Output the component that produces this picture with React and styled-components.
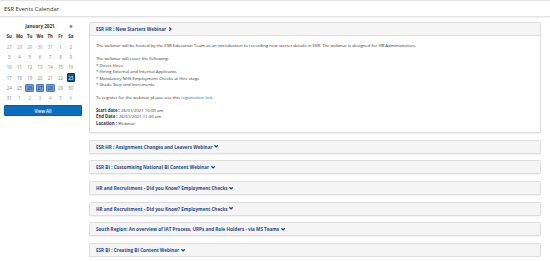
import React from 'react';
import styled, { createGlobalStyle } from 'styled-components';

const GlobalStyle = createGlobalStyle`
  body {
    margin: 0;
    background: #fff;
    font-family: "Open Sans", "Liberation Sans", sans-serif;
    color: #333;
  }
`;

const TopBar = styled.div`
  height: 15px;
  border-top: 1px solid #e6e6e6;
  border-bottom: 1px solid #e2e2e2;
  box-shadow: 0 1px 1px rgba(0, 0, 0, 0.04);
  display: flex;
  align-items: center;
  padding-left: 4px;
  font-size: 5.8px;
  color: #333;
`;

const Main = styled.div`
  display: flex;
  align-items: flex-start;
  gap: 7px;
  padding: 4px 9px 0 4px;
`;

const Sidebar = styled.div`
  width: 78px;
  flex-shrink: 0;
  display: flex;
  flex-direction: column;
`;

const CalGrid = styled.div`
  width: 72px;
  display: grid;
  grid-template-columns: repeat(7, 1fr);
  grid-auto-rows: 10.3px;
  font-size: 4.4px;
`;

const MonthTitle = styled.div`
  grid-column: 2 / 7;
  display: flex;
  align-items: center;
  justify-content: center;
  font-weight: 700;
  font-size: 4.6px;
  color: #333;
`;

const NavArrow = styled.div`
  grid-column: ${p => p.col};
  display: flex;
  align-items: center;
  justify-content: center;
  font-weight: 700;
  font-size: 5.5px;
  color: #333;
`;

const DayHead = styled.div`
  display: flex;
  align-items: center;
  justify-content: center;
  font-weight: 700;
  color: #333;
`;

const Day = styled.div`
  margin: 0.9px;
  display: flex;
  align-items: center;
  justify-content: center;
  border-radius: 1px;
  color: ${p => (p.kind === 'today' ? '#fff' : p.kind === 'event' ? '#1d3f78' : p.muted ? '#a0a0a0' : '#888')};
  background: ${p => (p.kind === 'today' ? '#0b5288' : p.kind === 'event' ? '#6b9bd8' : 'transparent')};
  border: 0.6px solid ${p => (p.kind === 'today' ? '#05385f' : p.kind === 'event' ? '#4f7fc0' : 'transparent')};
`;

const ViewAll = styled.button`
  margin-top: 1.5px;
  height: 11.5px;
  width: 100%;
  border: 0.6px solid #075da3;
  border-radius: 1px;
  background: #0a6ebd;
  color: #fff;
  font-family: inherit;
  font-size: 4.5px;
  font-weight: 600;
  padding: 0;
  cursor: pointer;
`;

const Events = styled.div`
  flex: 1;
  display: flex;
  flex-direction: column;
  gap: 6.7px;
  padding-top: 1px;
`;

const Panel = styled.div`
  border: 0.7px solid #ddd;
  border-radius: 1.5px;
  background: #fff;
  box-shadow: 0 1px 1px rgba(0, 0, 0, 0.06);
`;

const PanelHead = styled.div`
  height: 12px;
  display: flex;
  align-items: center;
  gap: 1.5px;
  padding-left: 6px;
  background: #f5f5f5;
  border-bottom: ${p => (p.open ? '0.7px solid #ddd' : 'none')};
  color: #274a8c;
  font-weight: 700;
  font-size: 4.6px;
`;

const PanelBody = styled.div`
  padding: 6.4px 6px 5.6px;
  font-size: 4.3px;
  line-height: 6.4px;
  color: #333;
  p {
    margin: 0 0 6.6px;
  }
  p:last-child {
    margin-bottom: 0;
  }
  a {
    color: #2a5db0;
    text-decoration: none;
  }
  b {
    font-weight: 700;
  }
`;

const Chevron = ({ dir }) => (
  <svg width="4.2" height="4.2" viewBox="0 0 10 10" aria-hidden="true">
    <path
      d={dir === 'right' ? 'M3 1 L7 5 L3 9' : 'M1 3 L5 7 L9 3'}
      fill="none"
      stroke="#1f3f7a"
      strokeWidth="3"
    />
  </svg>
);

const dayNames = ['Su', 'Mo', 'Tu', 'We', 'Th', 'Fr', 'Sa'];

const days = [
  [27, 1], [28, 1], [29, 1], [30, 1], [31, 1], [1], [2],
  [3], [4], [5], [6], [7], [8], [9],
  [10], [11], [12], [13], [14], [15], [16],
  [17], [18], [19], [20], [21], [22], [23, 0, 'today'],
  [24], [25], [26, 0, 'event'], [27, 0, 'event'], [28, 0, 'event'], [29], [30],
  [31], [1, 1], [2, 1], [3, 1], [4, 1], [5, 1], [6, 1],
];

const collapsed = [
  'ESR HR : Assignment Changes and Leavers Webinar',
  'ESR BI : Customising National BI Content Webinar',
  'HR and Recruitment - Did you Know? Employment Checks',
  'HR and Recruitment - Did you Know? Employment Checks',
  'South Region: An overview of IAT Process, URPs and Role Holders - via MS Teams',
  'ESR BI : Creating BI Content Webinar',
];

export default function App() {
  return (
    <>
      <GlobalStyle />
      <TopBar>ESR Events Calendar</TopBar>
      <Main>
        <Sidebar>
          <CalGrid>
            <MonthTitle>January 2021</MonthTitle>
            <NavArrow col={7}>»</NavArrow>
            {dayNames.map(d => (
              <DayHead key={d}>{d}</DayHead>
            ))}
            {days.map(([n, muted, kind], i) => (
              <Day key={i} muted={muted} kind={kind}>
                {n}
              </Day>
            ))}
          </CalGrid>
          <ViewAll>View All</ViewAll>
        </Sidebar>
        <Events>
          <Panel>
            <PanelHead open>
              ESR HR : New Starters Webinar <Chevron dir="right" />
            </PanelHead>
            <PanelBody>
              <p>
                The webinar will be hosted by the ESR Education Team as an introduction to recording new starter
                details in ESR. The webinar is designed for HR Administrators.
              </p>
              <p>
                The webinar will cover the following:
                <br />* Direct Hires
                <br />* Hiring External and Internal Applicants
                <br />* Mandatory NHS Employment Checks at Hire stage
                <br />* Grade Step and Increments
              </p>
              <p>
                To register for the webinar please use this <a href="#">registration link</a>
              </p>
              <p>
                <b>Start date :</b> 26/01/2021 10:00 am
                <br />
                <b>End Date :</b> 26/01/2021 11:30 am
                <br />
                <b>Location :</b> Webinar
              </p>
            </PanelBody>
          </Panel>
          {collapsed.map((t, i) => (
            <Panel key={i}>
              <PanelHead>
                {t} <Chevron dir="down" />
              </PanelHead>
            </Panel>
          ))}
        </Events>
      </Main>
    </>
  );
}
